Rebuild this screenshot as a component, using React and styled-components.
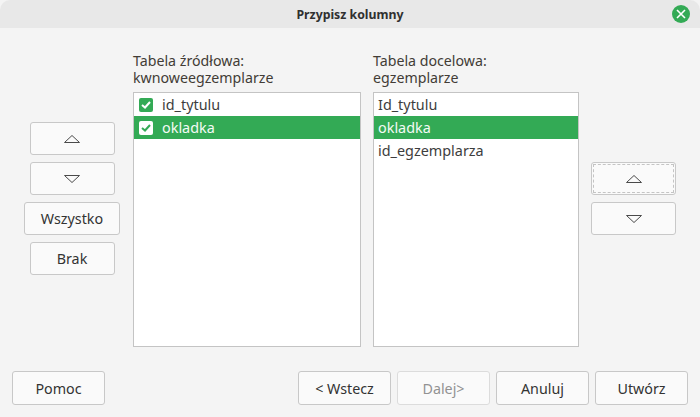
import React from "react";
import styled, { createGlobalStyle } from "styled-components";

const GlobalStyle = createGlobalStyle`
  html, body {
    margin: 0;
    padding: 0;
    background: #f4f4f4;
  }
  body {
    font-family: "Noto Sans", "Open Sans", "DejaVu Sans", sans-serif;
    font-size: 14px;
    color: #3d3d3d;
  }
`;

const Dialog = styled.div`
  width: 700px;
  height: 417px;
  display: flex;
  flex-direction: column;
  background: #f4f4f4;
  overflow: hidden;
`;

const TitleBar = styled.header`
  height: 28px;
  flex: none;
  display: flex;
  align-items: center;
  justify-content: center;
  position: relative;
  background: #e8e8e8;
  border-radius: 10px 10px 0 0;
  font-size: 12.3px;
  font-weight: 700;
  color: #303030;
`;

const CloseButton = styled.span`
  position: absolute;
  right: 10px;
  top: 5px;
  width: 18px;
  height: 18px;
  border-radius: 50%;
  background: #33aa55;
  display: flex;
  align-items: center;
  justify-content: center;
`;

const Main = styled.main`
  flex: 1;
  display: flex;
  align-items: flex-start;
  padding: 24px 24px 0;
`;

const SideColumn = styled.div`
  width: ${({ $width }) => $width}px;
  flex: none;
  display: flex;
  flex-direction: column;
  align-items: center;
  gap: 7px;
  margin-top: ${({ $top }) => $top}px;
  margin-left: ${({ $gap }) => $gap || 0}px;
`;

const Button = styled.button`
  box-sizing: border-box;
  width: ${({ $width }) => $width || 85}px;
  height: 33px;
  padding: 0;
  display: flex;
  align-items: center;
  justify-content: center;
  flex: none;
  background: #fafafa;
  border: 1px solid ${({ disabled }) => (disabled ? "#dcdcdc" : "#c8c8c8")};
  border-radius: 3px;
  font: inherit;
  font-size: 14.3px;
  color: ${({ disabled }) => (disabled ? "#929292" : "#333333")};
`;

const FocusRing = styled.span`
  box-sizing: border-box;
  width: 81px;
  height: 29px;
  border: 1px dashed #c4c4c4;
  display: flex;
  align-items: center;
  justify-content: center;
`;

const TableColumn = styled.section`
  display: flex;
  flex-direction: column;
  width: ${({ $width }) => $width}px;
  margin-left: ${({ $gap }) => $gap}px;
`;

const Caption = styled.div`
  height: 40px;
  line-height: 17px;
  font-size: 14.2px;
  white-space: pre-line;
  color: #423c36;
`;

const List = styled.ul`
  box-sizing: border-box;
  height: 255px;
  margin: 0;
  padding: 0;
  list-style: none;
  background: #ffffff;
  border: 1px solid #c4c4c4;
`;

const Row = styled.li`
  height: 23px;
  display: flex;
  align-items: center;
  gap: 9px;
  padding-left: ${({ $check }) => ($check ? 5 : 4)}px;
  font-size: 14.4px;
  background: ${({ $selected }) => ($selected ? "#33aa55" : "transparent")};
  color: ${({ $selected }) => ($selected ? "#f4fbf6" : "#3d3d3d")};
`;

const Check = styled.span`
  box-sizing: border-box;
  width: 14px;
  height: 14px;
  border-radius: 2px;
  flex: none;
  display: flex;
  align-items: center;
  justify-content: center;
  background: ${({ $inverted }) => ($inverted ? "#ffffff" : "#33aa55")};
`;

const Footer = styled.footer`
  height: 46px;
  flex: none;
  display: flex;
  gap: 6px;
  padding: 0 12px;
`;

const FooterButton = styled(Button)`
  width: 93px;
  height: 34px;
  margin-left: ${({ $push }) => ($push ? "auto" : 0)};
`;

const Arrow = ({ down }) => (
  <svg width="16" height="10" viewBox="0 0 16 10" fill="none" stroke="#4a4a4a" strokeWidth="1">
    {down ? <path d="M.5 1.5h15L8 8.5z" /> : <path d="M.5 8.5h15L8 1.5z" />}
  </svg>
);

const Tick = ({ color }) => (
  <svg width="10" height="8" viewBox="0 0 10 8" fill="none" stroke={color} strokeWidth="2">
    <path d="M1 4l3 2.5L9 1" />
  </svg>
);

const App = () => {
  return (
    <Dialog>
      <GlobalStyle />
      <TitleBar>
        Przypisz kolumny
        <CloseButton>
          <svg width="10" height="10" viewBox="0 0 10 10" stroke="#ffffff" strokeWidth="1.6">
            <path d="M1 1l8 8M9 1l-8 8" />
          </svg>
        </CloseButton>
      </TitleBar>
      <Main>
        <SideColumn $width={96} $top={70}>
          <Button><Arrow /></Button>
          <Button><Arrow down /></Button>
          <Button $width={96}>Wszystko</Button>
          <Button>Brak</Button>
        </SideColumn>
        <TableColumn $width={228} $gap={13}>
          <Caption>{"Tabela źródłowa:\nkwnoweegzemplarze"}</Caption>
          <List>
            <Row $check>
              <Check><Tick color="#ffffff" /></Check>
              id_tytulu
            </Row>
            <Row $check $selected>
              <Check $inverted><Tick color="#33aa55" /></Check>
              okladka
            </Row>
          </List>
        </TableColumn>
        <TableColumn $width={206} $gap={12}>
          <Caption>{"Tabela docelowa:\negzemplarze"}</Caption>
          <List>
            <Row>Id_tytulu</Row>
            <Row $selected>okladka</Row>
            <Row>id_egzemplarza</Row>
          </List>
        </TableColumn>
        <SideColumn $width={85} $top={110} $gap={12}>
          <Button><FocusRing><Arrow /></FocusRing></Button>
          <Button><Arrow down /></Button>
        </SideColumn>
      </Main>
      <Footer>
        <FooterButton>Pomoc</FooterButton>
        <FooterButton $push>&lt; Wstecz</FooterButton>
        <FooterButton disabled>Dalej&gt;</FooterButton>
        <FooterButton>Anuluj</FooterButton>
        <FooterButton>Utwórz</FooterButton>
      </Footer>
    </Dialog>
  );
};

export default App;
